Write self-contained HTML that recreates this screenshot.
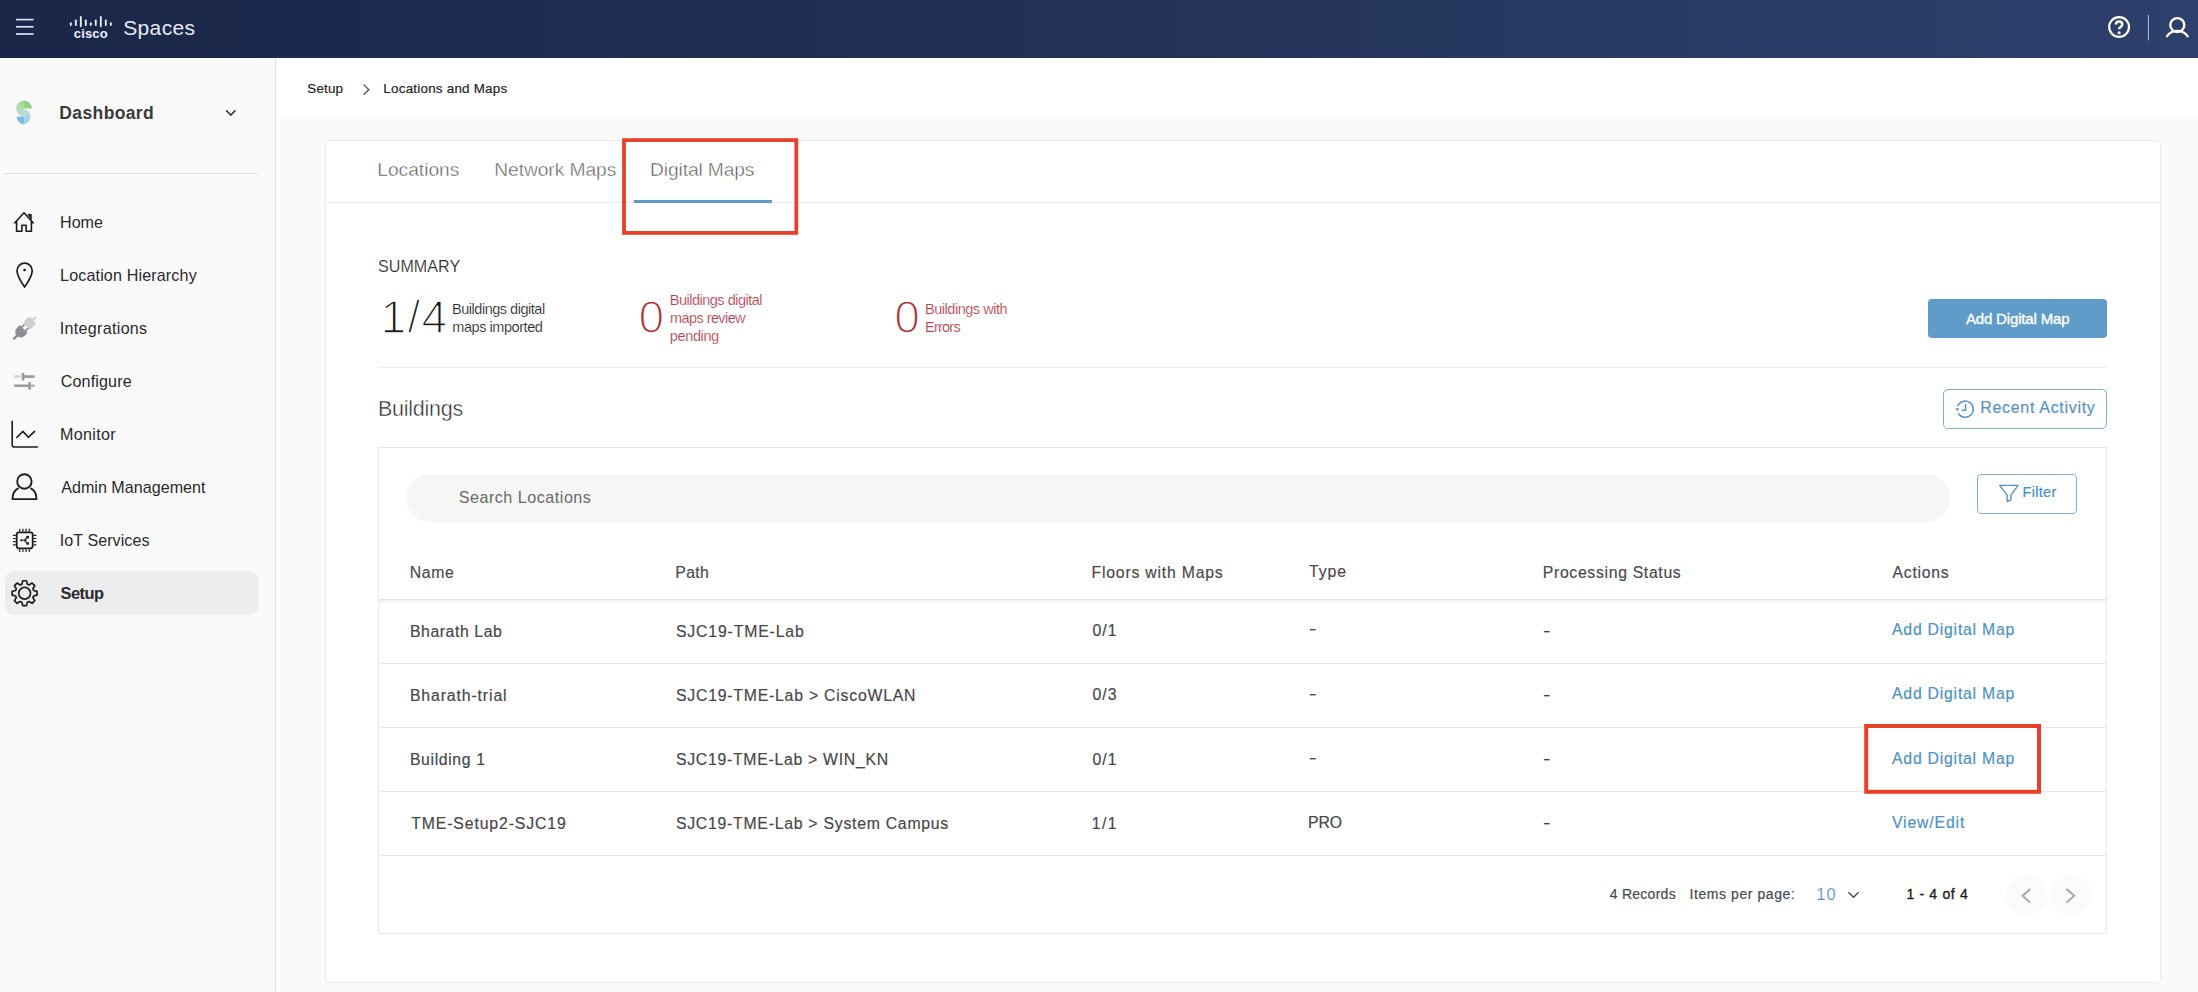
<!DOCTYPE html>
<html lang="en">
<head>
<meta charset="utf-8">
<title>Cisco Spaces - Locations and Maps</title>
<style>
*{box-sizing:border-box;margin:0;padding:0}
html,body{width:2198px;height:992px;overflow:hidden;background:#fafafa;font-family:"Liberation Sans",Arial,sans-serif;color:#333}
.a{position:absolute}
.t{position:absolute;white-space:nowrap;line-height:1}
.dsh{font-size:15.5px;color:#484848;transform:scaleX(1.45);transform-origin:0 50%;-webkit-text-stroke:.2px #484848}
.hl{position:absolute;height:1px;background:#e9e9e9}
svg{position:absolute;overflow:visible}
</style>
</head>
<body>
<!-- top bar -->
<div class="a" style="left:0;top:0;width:2198px;height:58px;background:linear-gradient(90deg,#1a2748 0%,#1c2a4e 20%,#223256 50%,#293a63 75%,#2d3f6b 100%)"></div>
<!-- sidebar -->
<div class="a" style="left:0;top:58px;width:276px;height:934px;background:#fafafa;border-right:1px solid #dfdfdf"></div>
<!-- breadcrumb bar -->
<div class="a" style="left:276px;top:58px;width:1922px;height:60px;background:#fff"></div>
<div class="a" style="left:276px;top:118px;width:4px;height:874px;background:#fff"></div>
<!-- card -->
<div class="a" style="left:325px;top:140px;width:1836px;height:843px;background:#fff;border:1px solid #ebebeb;border-radius:4px"></div>
<div class="hl" style="left:326px;top:202px;width:1834px;background:#ececec"></div>
<div class="a" style="left:634px;top:199.5px;width:138px;height:3px;background:#5d9bcb"></div>
<div class="hl" style="left:378px;top:367px;width:1729px;background:#ededed"></div>
<!-- primary button -->
<div class="a" style="left:1928px;top:299px;width:179px;height:39px;background:#609cc9;border-radius:4px"></div>
<!-- recent activity button -->
<div class="a" style="left:1943px;top:389px;width:164px;height:40px;border:1px solid #7fb1d8;border-radius:5px;background:#fff"></div>
<!-- table container -->
<div class="a" style="left:378px;top:447px;width:1729px;height:487px;border:1px solid #e8e8e8;background:#fff"></div>
<div class="a" style="left:406px;top:474px;width:1544px;height:48px;border-radius:24px;background:#f6f6f6"></div>
<div class="a" style="left:1977px;top:474px;width:100px;height:40px;border:1px solid #7fb1d8;border-radius:4px;background:#fff"></div>
<div class="a" style="left:379px;top:599px;width:1727px;height:5px;background:linear-gradient(#dedede 0,#ececec 20%,#f6f6f6 50%,#fff 100%)"></div>
<div class="hl" style="left:379px;top:663px;width:1727px"></div>
<div class="hl" style="left:379px;top:727px;width:1727px"></div>
<div class="hl" style="left:379px;top:791px;width:1727px"></div>
<div class="hl" style="left:379px;top:855px;width:1727px"></div>
<div class="a" style="left:2006px;top:875px;width:41px;height:41px;border-radius:21px;background:#fbfbfb"></div>
<div class="a" style="left:2050px;top:875px;width:41px;height:41px;border-radius:21px;background:#fbfbfb"></div>
<!-- selected menu -->
<div class="a" style="left:5px;top:571px;width:253px;height:44px;border-radius:9px;background:#ededee"></div>
<div class="hl" style="left:5px;top:173px;width:253px;background:#e0e0e0"></div>

<!-- ICONS (page coordinates) -->
<svg width="2198" height="992" viewBox="0 0 2198 992" style="left:0;top:0">
 <!-- hamburger -->
 <g stroke="#dde2f0" stroke-width="1.7"><line x1="16" y1="19.6" x2="33.5" y2="19.6"/><line x1="16" y1="26.8" x2="33.5" y2="26.8"/><line x1="16" y1="34" x2="33.5" y2="34"/></g>
 <!-- cisco bars -->
 <g stroke="#eef1fa" stroke-width="1.8" stroke-linecap="round">
  <line x1="70.8" y1="23.2" x2="70.8" y2="25"/><line x1="75.8" y1="20.3" x2="75.8" y2="25"/><line x1="80.8" y1="17" x2="80.8" y2="26.3"/><line x1="85.8" y1="20.3" x2="85.8" y2="25"/><line x1="90.8" y1="23.2" x2="90.8" y2="25"/><line x1="95.8" y1="20.3" x2="95.8" y2="25"/><line x1="100.8" y1="17" x2="100.8" y2="26.3"/><line x1="105.8" y1="20.3" x2="105.8" y2="25"/><line x1="110.8" y1="23.2" x2="110.8" y2="25"/>
 </g>
 <!-- help -->
 <circle cx="2119.100" cy="27" r="9.900" fill="none" stroke="#fff" stroke-width="2.200"/>
 <path d="M2115.900 24.600c0-1.900 1.400-3.100 3.200-3.100s3.200 1.200 3.200 2.900c0 2.300-3.200 2.300-3.200 4.800" fill="none" stroke="#fff" stroke-width="2.400"/>
 <circle cx="2119.100" cy="32.700" r="1.500" fill="#fff"/>
 <line x1="2148.4" y1="15" x2="2148.4" y2="40.3" stroke="#b9c0d6" stroke-width="1"/>
 <!-- user -->
 <circle cx="2177.300" cy="25.100" r="7" fill="none" stroke="#fff" stroke-width="2.300"/>
 <path d="M2167 36.2c2.300-3.400 6-5.300 10.300-5.300s8 1.900 10.300 5.300" fill="none" stroke="#fff" stroke-width="2.300" stroke-linecap="round"/>
 <!-- dashboard logo -->
 <defs>
  <linearGradient id="gA" x1="0" y1="0" x2="1" y2="1"><stop offset="0" stop-color="#9bdc7c"/><stop offset="1" stop-color="#6fcf9c"/></linearGradient>
  <linearGradient id="gB" x1="0" y1="0" x2="1" y2="1"><stop offset="0" stop-color="#7fc6e8"/><stop offset="1" stop-color="#5f9fe0"/></linearGradient>
 </defs>
 <defs>
  <linearGradient id="lgT" x1="0" y1="0" x2="0" y2="1"><stop offset="0" stop-color="#a3dc93"/><stop offset="1" stop-color="#bcddd3"/></linearGradient>
  <linearGradient id="lgB" x1="0" y1="0" x2="0" y2="1"><stop offset="0" stop-color="#b9dde0"/><stop offset="1" stop-color="#a0cdf0"/></linearGradient>
  <filter id="soft" x="-20%" y="-20%" width="140%" height="140%"><feGaussianBlur stdDeviation="0.35"/></filter>
 </defs>
 <g filter="url(#soft)">
  <path d="M24 108.400V100.600A7.800 7.800 0 0 0 24 116.200Z" fill="url(#lgT)"/>
  <path d="M24 108.400V100.600A7.800 7.800 0 0 1 31.800 108.400Z" fill="#93d380"/>
  <path d="M24.200 116.600V109.200A7.600 7.600 0 0 1 24.200 124.200Z" fill="url(#lgB)"/>
  <path d="M24.200 116.600V124.200A7.600 7.600 0 0 1 16.600 116.600Z" fill="#79bde7"/>
 </g>
 <!-- dashboard chevron -->
 <path d="M226.200 110.400l4.600 4.600l4.600-4.600" fill="none" stroke="#3c3c3c" stroke-width="1.700"/>
 <!-- breadcrumb chevron -->
 <path d="M363.600 84.600l5.300 5.100l-5.300 5.100" fill="none" stroke="#444" stroke-width="1.200"/>
 <!-- home -->
 <g fill="none" stroke="#1d1d1d" stroke-width="1.600" stroke-linejoin="round" stroke-linecap="round">
  <path d="M14.600 223L24 212.800L33.400 223"/>
  <path d="M16.600 221.500V231.300H21.900V225.300H26.100V231.300H31.400V221.500"/>
 </g>
 <path d="M28 214.300H31.300V219.500Z" fill="#1d1d1d" stroke="#1d1d1d" stroke-width=".8" stroke-linejoin="round"/>
 <!-- pin -->
 <path d="M24.600 287C20.200 280.600 17 275.700 17 270.700A7.600 7.600 0 0 1 32.200 270.700C32.200 275.700 29 280.600 24.600 287Z" fill="none" stroke="#1d1d1d" stroke-width="1.700" stroke-linejoin="round"/>
 <circle cx="24.600" cy="270" r="1.350" fill="#1d1d1d"/>
 <!-- plug -->
 <g transform="translate(24.700 328) rotate(45) scale(.92)">
  <rect x="-1.200" y="-17" width="2.400" height="5.500" fill="#cfcfcf"/>
  <path d="M-3.500 -12.500h7a2 2 0 0 1 2 2v6.500a1.500 1.500 0 0 1-1.500 1.500h-8a1.500 1.500 0 0 1-1.500-1.500v-6.500a2 2 0 0 1 2-2z" fill="#cfcfcf"/>
  <rect x="-3.800" y="-2.500" width="1.900" height="4.500" fill="#8e8e93"/>
  <rect x="1.900" y="-2.500" width="1.900" height="4.500" fill="#8e8e93"/>
  <path d="M-6 1.500h12v4.500a6 6 0 0 1-12 0z" fill="#8e8e93"/>
  <rect x="-1.300" y="11" width="2.600" height="6.500" fill="#8e8e93"/>
 </g>
 <!-- configure -->
 <g stroke-linecap="round">
  <line x1="15.200" y1="376.600" x2="19" y2="376.600" stroke="#d4d4d4" stroke-width="2.600"/>
  <line x1="25" y1="376.600" x2="33.700" y2="376.600" stroke="#9c9c9c" stroke-width="2.600"/>
  <line x1="23" y1="374.200" x2="23" y2="379.200" stroke="#9c9c9c" stroke-width="2.800"/>
  <line x1="15.200" y1="385.800" x2="28" y2="385.800" stroke="#9c9c9c" stroke-width="2.600"/>
  <line x1="29.600" y1="383.400" x2="29.600" y2="388.400" stroke="#9c9c9c" stroke-width="2.800"/>
  <line x1="32" y1="385.800" x2="33.700" y2="385.800" stroke="#b4b4b4" stroke-width="2.600"/>
 </g>
 <!-- monitor -->
 <g fill="none" stroke="#1d1d1d" stroke-width="1.600" stroke-linecap="round" stroke-linejoin="round">
  <path d="M12.200 421.300V444.800a2.200 2.200 0 0 0 2.200 2.200H37.400"/>
  <path d="M16.800 437.500L22.900 431.400L28.300 437.300L34.600 431.400"/>
 </g>
 <!-- admin -->
 <g fill="none" stroke="#1d1d1d" stroke-width="1.900" stroke-linejoin="round">
  <circle cx="24.400" cy="481.500" r="7.200"/>
  <path d="M18.600 488.200C15 489.800 12.700 493.600 12.500 499.100H36.500C36.300 493.600 34 489.800 30.400 488.200"/>
 </g>
 <!-- iot -->
 <g fill="none" stroke="#1d1d1d">
  <rect x="16.700" y="532.300" width="16" height="16" rx="2.200" stroke-width="1.800"/>
  <g stroke-width="1.200">
   <path d="M19.700 528.800V531.500M22.900 528.800V531.500M26.100 528.800V531.500M29.300 528.800V531.500"/>
   <path d="M19.700 549.200V551.900M22.900 549.200V551.900M26.100 549.200V551.900M29.300 549.200V551.900"/>
   <path d="M13 535.300H15.800M13 538.500H15.800M13 541.700H15.800M13 544.900H15.800"/>
   <path d="M33.600 535.300H36.400M33.600 538.500H36.400M33.600 541.700H36.400M33.600 544.900H36.400"/>
  </g>
  <path d="M21.500 540.300H24.300L26.600 537.600M24.300 540.300L26.600 543M24.300 540.300H27" stroke-width="1.100"/>
 </g>
 <circle cx="21.300" cy="540.300" r="1.150" fill="#1d1d1d"/>
 <rect x="26.300" y="535.900" width="2.600" height="2.600" fill="#1d1d1d"/><rect x="26.300" y="542.100" width="2.600" height="2.600" fill="#1d1d1d"/>
 <!-- gear -->
 <path d="M21.85 584.21 L22.74 580.74 L26.46 580.74 L27.35 584.21 L29.01 584.90 L32.09 583.07 L34.73 585.71 L32.90 588.79 L33.59 590.45 L37.06 591.34 L37.06 595.06 L33.59 595.95 L32.90 597.61 L34.73 600.69 L32.09 603.33 L29.01 601.50 L27.35 602.19 L26.46 605.66 L22.74 605.66 L21.85 602.19 L20.19 601.50 L17.11 603.33 L14.47 600.69 L16.30 597.61 L15.61 595.95 L12.14 595.06 L12.14 591.34 L15.61 590.45 L16.30 588.79 L14.47 585.71 L17.11 583.07 L20.19 584.90Z" fill="none" stroke="#1d1d1d" stroke-width="1.700" stroke-linejoin="round"/>
 <circle cx="24.600" cy="593.200" r="5.900" fill="none" stroke="#1d1d1d" stroke-width="1.700"/>
 <!-- recent activity icon -->
 <g fill="none" stroke="#5793c5" stroke-width="1.500">
  <path d="M1957.600 406.200A8.100 8.100 0 1 1 1958.300 413.500"/>
  <path d="M1965.600 404.300V410.300H1961.800"/>
 </g>
 <path d="M1955.300 408.300L1957.300 411.200L1959.300 408.300Z" fill="#5793c5"/>
 <!-- funnel -->
 <path d="M1999.700 485.400H2018.100L2010.900 495.200V499.800L2007.200 501.700V495.200Z" fill="none" stroke="#5793c5" stroke-width="1.350" stroke-linejoin="round"/>
 <!-- paginator -->
 <path d="M1848.400 892.200l5.100 5.100l5.100-5.100" fill="none" stroke="#444" stroke-width="1.250"/>
 <path d="M2030.300 889L2022.600 895.800L2030.300 902.600" fill="none" stroke="#a6a6a6" stroke-width="1.900"/>
 <path d="M2066.500 889L2074.200 895.800L2066.500 902.600" fill="none" stroke="#a6a6a6" stroke-width="1.900"/>
 <!-- red highlight boxes -->
 <rect x="624" y="140.100" width="172.300" height="92.800" fill="none" stroke="#e8412a" stroke-width="3.800"/>
 <rect x="1866.200" y="726" width="172.800" height="65.800" fill="none" stroke="#e8412a" stroke-width="4"/>
</svg>
<div class="t" id="cisco" style="left:73.800px;top:27.300px;font-size:13px;font-weight:bold;color:#eef1fa;letter-spacing:.15px">cisco</div>
<div class="t dsh" style="left:1308.6px;top:621.4px">-</div>
<div class="t dsh" style="left:1308.6px;top:685.5px">-</div>
<div class="t dsh" style="left:1308.6px;top:749.7px">-</div>
<div class="t dsh" style="left:1543.4px;top:623.0px">-</div>
<div class="t dsh" style="left:1543.4px;top:687.1px">-</div>
<div class="t dsh" style="left:1543.4px;top:751.3px">-</div>
<div class="t dsh" style="left:1543.4px;top:815.4px">-</div>
<div class="t" id="m1" style="left:60.07px;top:214.17px;font-size:16.1px;font-weight:normal;color:#2a2a2a;letter-spacing:-0.042px;">Home</div>
<div class="t" id="m2" style="left:60.07px;top:267.17px;font-size:16.1px;font-weight:normal;color:#2a2a2a;letter-spacing:0.144px;">Location Hierarchy</div>
<div class="t" id="m3" style="left:59.83px;top:320.17px;font-size:16.1px;font-weight:normal;color:#2a2a2a;letter-spacing:0.294px;">Integrations</div>
<div class="t" id="m4" style="left:60.66px;top:373.17px;font-size:16.1px;font-weight:normal;color:#2a2a2a;letter-spacing:0.149px;">Configure</div>
<div class="t" id="m5" style="left:60.07px;top:426.17px;font-size:16.1px;font-weight:normal;color:#2a2a2a;letter-spacing:0.328px;">Monitor</div>
<div class="t" id="m6" style="left:61.17px;top:479.17px;font-size:16.1px;font-weight:normal;color:#2a2a2a;letter-spacing:0.019px;">Admin Management</div>
<div class="t" id="m7" style="left:59.83px;top:532.17px;font-size:16.1px;font-weight:normal;color:#2a2a2a;letter-spacing:0.044px;">IoT Services</div>
<div class="t" id="m8" style="left:60.61px;top:585.12px;font-size:16.4px;font-weight:bold;color:#2a2a2a;letter-spacing:-0.523px;">Setup</div>
<div class="t" id="dash" style="left:59.35px;top:104.89px;font-size:17.5px;font-weight:bold;color:#3a3a3a;letter-spacing:0.373px;">Dashboard</div>
<div class="t" id="bc1" style="left:307.32px;top:81.96px;font-size:13.4px;font-weight:normal;color:#1f1f1f;letter-spacing:0.190px;-webkit-text-stroke:.2px #1f1f1f">Setup</div>
<div class="t" id="bc2" style="left:383.36px;top:81.96px;font-size:13.4px;font-weight:normal;color:#1f1f1f;letter-spacing:0.230px;-webkit-text-stroke:.2px #1f1f1f">Locations and Maps</div>
<div class="t" id="sp" style="left:123.29px;top:16.72px;font-size:21px;font-weight:normal;color:#e6eaf6;letter-spacing:0.328px;">Spaces</div>
<div class="t" id="tab1" style="left:377.29px;top:159.85px;font-size:19.2px;font-weight:normal;color:#555;letter-spacing:-0.007px;-webkit-text-stroke:.45px #fff">Locations</div>
<div class="t" id="tab2" style="left:494.25px;top:159.85px;font-size:19.2px;font-weight:normal;color:#555;letter-spacing:-0.054px;-webkit-text-stroke:.45px #fff">Network Maps</div>
<div class="t" id="tab3" style="left:650.09px;top:159.85px;font-size:19.2px;font-weight:normal;color:#555;letter-spacing:-0.113px;-webkit-text-stroke:.45px #fff">Digital Maps</div>
<div class="t" id="sum" style="left:378.00px;top:258.07px;font-size:16.1px;font-weight:normal;color:#2e2e2e;letter-spacing:0.026px;-webkit-text-stroke:.15px #fff">SUMMARY</div>
<div class="t" id="big1" style="left:380.46px;top:294.29px;font-size:46.2px;font-weight:normal;color:#161616;letter-spacing:1.236px;-webkit-text-stroke:1.6px #fff">1/4</div>
<div class="t" id="l1a" style="left:452.10px;top:301.53px;font-size:14.5px;font-weight:normal;color:#2a2a2a;letter-spacing:-0.484px;-webkit-text-stroke:.15px #fff">Buildings digital</div>
<div class="t" id="l1b" style="left:452.26px;top:319.93px;font-size:14.5px;font-weight:normal;color:#2a2a2a;letter-spacing:-0.444px;-webkit-text-stroke:.15px #fff">maps imported</div>
<div class="t" id="big2" style="left:638.46px;top:294.29px;font-size:46.2px;font-weight:normal;color:#ad2f39;letter-spacing:0.500px;-webkit-text-stroke:1.6px #fff">0</div>
<div class="t" id="l2a" style="left:669.77px;top:292.73px;font-size:14.5px;font-weight:normal;color:#b5414a;letter-spacing:-0.501px;-webkit-text-stroke:.15px #fff">Buildings digital</div>
<div class="t" id="l2b" style="left:670.12px;top:310.93px;font-size:14.5px;font-weight:normal;color:#b5414a;letter-spacing:-0.591px;-webkit-text-stroke:.15px #fff">maps review</div>
<div class="t" id="l2c" style="left:669.84px;top:329.13px;font-size:14.5px;font-weight:normal;color:#b5414a;letter-spacing:-0.377px;-webkit-text-stroke:.15px #fff">pending</div>
<div class="t" id="big3" style="left:894.21px;top:294.29px;font-size:46.2px;font-weight:normal;color:#ad2f39;letter-spacing:0.500px;-webkit-text-stroke:1.6px #fff">0</div>
<div class="t" id="l3a" style="left:924.97px;top:301.53px;font-size:14.5px;font-weight:normal;color:#b5414a;letter-spacing:-0.464px;-webkit-text-stroke:.15px #fff">Buildings with</div>
<div class="t" id="l3b" style="left:925.05px;top:319.93px;font-size:14.5px;font-weight:normal;color:#b5414a;letter-spacing:-0.771px;-webkit-text-stroke:.15px #fff">Errors</div>
<div class="t" id="btn1" style="left:1965.89px;top:311.20px;font-size:15px;font-weight:normal;color:#fff;letter-spacing:-0.152px;-webkit-text-stroke:.35px #fff">Add Digital Map</div>
<div class="t" id="bld" style="left:377.88px;top:398.50px;font-size:21.5px;font-weight:normal;color:#242424;letter-spacing:-0.239px;-webkit-text-stroke:.45px #fff">Buildings</div>
<div class="t" id="ra" style="left:1980.24px;top:400.26px;font-size:16px;font-weight:normal;color:#5793c5;letter-spacing:0.688px;-webkit-text-stroke:.2px #5793c5">Recent Activity</div>
<div class="t" id="srch" style="left:458.71px;top:488.77px;font-size:16.1px;font-weight:normal;color:#686868;letter-spacing:0.522px;">Search Locations</div>
<div class="t" id="flt" style="left:2022.60px;top:485.34px;font-size:14.6px;font-weight:normal;color:#4b8ec4;letter-spacing:0.250px;-webkit-text-stroke:.2px #4b8ec4">Filter</div>
<div class="t" id="h1" style="left:409.80px;top:564.63px;font-size:15.8px;font-weight:normal;color:#4a4a4a;letter-spacing:0.620px;-webkit-text-stroke:.18px #4a4a4a">Name</div>
<div class="t" id="h2" style="left:675.36px;top:564.63px;font-size:15.8px;font-weight:normal;color:#4a4a4a;letter-spacing:0.341px;-webkit-text-stroke:.18px #4a4a4a">Path</div>
<div class="t" id="h3" style="left:1091.57px;top:564.53px;font-size:15.8px;font-weight:normal;color:#4a4a4a;letter-spacing:0.781px;-webkit-text-stroke:.18px #4a4a4a">Floors with Maps</div>
<div class="t" id="h4" style="left:1309.08px;top:563.53px;font-size:15.8px;font-weight:normal;color:#4a4a4a;letter-spacing:0.906px;-webkit-text-stroke:.18px #4a4a4a">Type</div>
<div class="t" id="h5" style="left:1542.76px;top:564.53px;font-size:15.8px;font-weight:normal;color:#4a4a4a;letter-spacing:0.669px;-webkit-text-stroke:.18px #4a4a4a">Processing Status</div>
<div class="t" id="h6" style="left:1892.55px;top:564.53px;font-size:15.8px;font-weight:normal;color:#4a4a4a;letter-spacing:0.725px;-webkit-text-stroke:.18px #4a4a4a">Actions</div>
<div class="t" id="r0a" style="left:409.94px;top:623.53px;font-size:15.8px;font-weight:normal;color:#484848;letter-spacing:0.578px;-webkit-text-stroke:.2px #484848">Bharath Lab</div>
<div class="t" id="r0b" style="left:675.96px;top:623.53px;font-size:15.8px;font-weight:normal;color:#484848;letter-spacing:0.841px;-webkit-text-stroke:.2px #484848">SJC19-TME-Lab</div>
<div class="t" id="r0c" style="left:1092.38px;top:623.23px;font-size:15.8px;font-weight:normal;color:#484848;letter-spacing:1.098px;-webkit-text-stroke:.2px #484848">0/1</div>
<div class="t" id="r0f" style="left:1892.07px;top:622.23px;font-size:15.8px;font-weight:normal;color:#4e92c6;letter-spacing:0.763px;-webkit-text-stroke:.2px #4e92c6">Add Digital Map</div>
<div class="t" id="r1a" style="left:409.94px;top:687.63px;font-size:15.8px;font-weight:normal;color:#484848;letter-spacing:0.881px;-webkit-text-stroke:.2px #484848">Bharath-trial</div>
<div class="t" id="r1b" style="left:675.96px;top:687.63px;font-size:15.8px;font-weight:normal;color:#484848;letter-spacing:0.779px;-webkit-text-stroke:.2px #484848">SJC19-TME-Lab &gt; CiscoWLAN</div>
<div class="t" id="r1c" style="left:1092.38px;top:687.33px;font-size:15.8px;font-weight:normal;color:#484848;letter-spacing:1.125px;-webkit-text-stroke:.2px #484848">0/3</div>
<div class="t" id="r1f" style="left:1892.07px;top:686.33px;font-size:15.8px;font-weight:normal;color:#4e92c6;letter-spacing:0.763px;-webkit-text-stroke:.2px #4e92c6">Add Digital Map</div>
<div class="t" id="r2a" style="left:409.94px;top:751.83px;font-size:15.8px;font-weight:normal;color:#484848;letter-spacing:0.632px;-webkit-text-stroke:.2px #484848">Building 1</div>
<div class="t" id="r2b" style="left:675.96px;top:751.83px;font-size:15.8px;font-weight:normal;color:#484848;letter-spacing:0.720px;-webkit-text-stroke:.2px #484848">SJC19-TME-Lab &gt; WIN_KN</div>
<div class="t" id="r2c" style="left:1092.38px;top:751.53px;font-size:15.8px;font-weight:normal;color:#484848;letter-spacing:1.098px;-webkit-text-stroke:.2px #484848">0/1</div>
<div class="t" id="r2f" style="left:1892.07px;top:750.53px;font-size:15.8px;font-weight:normal;color:#4e92c6;letter-spacing:0.763px;-webkit-text-stroke:.2px #4e92c6">Add Digital Map</div>
<div class="t" id="r3a" style="left:411.24px;top:815.93px;font-size:15.8px;font-weight:normal;color:#484848;letter-spacing:0.878px;-webkit-text-stroke:.2px #484848">TME-Setup2-SJC19</div>
<div class="t" id="r3b" style="left:675.96px;top:815.93px;font-size:15.8px;font-weight:normal;color:#484848;letter-spacing:0.742px;-webkit-text-stroke:.2px #484848">SJC19-TME-Lab &gt; System Campus</div>
<div class="t" id="r3c" style="left:1091.68px;top:815.63px;font-size:15.8px;font-weight:normal;color:#484848;letter-spacing:1.458px;-webkit-text-stroke:.2px #484848">1/1</div>
<div class="t" id="r3d" style="left:1308.10px;top:814.93px;font-size:15.8px;font-weight:normal;color:#484848;letter-spacing:-0.189px;-webkit-text-stroke:.2px #484848">PRO</div>
<div class="t" id="r3f" style="left:1891.91px;top:814.63px;font-size:15.8px;font-weight:normal;color:#4e92c6;letter-spacing:0.856px;-webkit-text-stroke:.2px #4e92c6">View/Edit</div>
<div class="t" id="pg1" style="left:1609.69px;top:887.15px;font-size:14px;font-weight:normal;color:#4a4a4a;letter-spacing:0.267px;-webkit-text-stroke:.2px #4a4a4a">4 Records</div>
<div class="t" id="pg2" style="left:1689.53px;top:887.15px;font-size:14px;font-weight:normal;color:#4a4a4a;letter-spacing:0.569px;-webkit-text-stroke:.2px #4a4a4a">Items per page:</div>
<div class="t" id="pg3" style="left:1816.16px;top:886.32px;font-size:16.4px;font-weight:normal;color:#4a8fc8;letter-spacing:1.322px;-webkit-text-stroke:.2px #fff">10</div>
<div class="t" id="pg4" style="left:1906.42px;top:887.15px;font-size:14px;font-weight:normal;color:#1c1c1c;letter-spacing:0.680px;-webkit-text-stroke:.35px #1c1c1c">1 - 4 of 4</div>
</body>
</html>
